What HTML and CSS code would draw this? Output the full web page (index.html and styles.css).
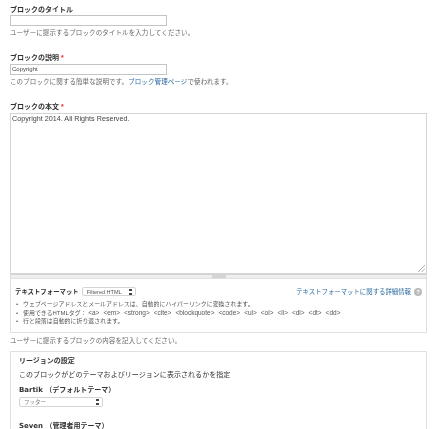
FILE: index.html
```html
<!DOCTYPE html>
<html lang="ja">
<head>
<meta charset="utf-8">
<title>ブロックの設定</title>
<link rel="stylesheet" href="styles.css">
</head>
<body>
<div class="page">
  <div class="item first">
    <label class="label">ブロックのタイトル</label>
    <div class="fake-input"></div>
    <div class="help">ユーザーに提示するブロックのタイトルを入力してください。</div>
  </div>
  <div class="item">
    <label class="label">ブロックの説明 <span class="req">*</span></label>
    <div class="fake-input">Copyright</div>
    <div class="help">このブロックに関する簡単な説明です。<a class="link">ブロック管理ページ</a>で使われます。</div>
  </div>
  <div class="item last">
    <label class="label">ブロックの本文 <span class="req">*</span></label>
    <div class="textarea">
      <div class="text">Copyright 2014. All Rights Reserved.</div>
      <svg class="resize" width="7" height="7" viewBox="0 0 7 7"><path d="M0 7L7 0M3.500 7L7 3.500" stroke="#aaa" fill="none"/></svg>
    </div>
    <div class="grippie"><span class="grip"></span></div>
    <div class="format">
      <div class="format-head">
        <div class="format-left">
          <span class="format-title">テキストフォーマット</span>
          <span class="select small">Filtered HTML<span class="arrows"></span></span>
        </div>
        <div class="format-right">
          <a class="link">テキストフォーマットに関する詳細情報</a>
          <span class="q">?</span>
        </div>
      </div>
      <ul class="tips">
        <li>ウェブページアドレスとメールアドレスは、自動的にハイパーリンクに変換されます。</li>
        <li>使用できるHTMLタグ： <span class="tags">&lt;a&gt; &lt;em&gt; &lt;strong&gt; &lt;cite&gt; &lt;blockquote&gt; &lt;code&gt; &lt;ul&gt; &lt;ol&gt; &lt;li&gt; &lt;dl&gt; &lt;dt&gt; &lt;dd&gt;</span></li>
        <li>行と段落は自動的に折り返されます。</li>
      </ul>
    </div>
    <div class="help after">ユーザーに提示するブロックの内容を記入してください。</div>
  </div>
  <div class="fieldset">
    <div class="fs-title">リージョンの設定</div>
    <div class="fs-desc">このブロックがどのテーマおよびリージョンに表示されるかを指定</div>
    <div class="theme">Bartik （デフォルトテーマ）</div>
    <span class="select wide">フッター<span class="arrows"></span></span>
    <div class="theme second">Seven （管理者用テーマ）</div>
  </div>
</div>
</body>
</html>
```
FILE: styles.css
```css
html, body {
  margin: 0;
  padding: 0;
  background: #fff;
  overflow: hidden;
}
body {
  width: 440px;
  height: 429px;
  font-family: "Liberation Sans", "Noto Sans CJK JP", sans-serif;
  color: #333;
}
.page {
  padding: 0 13px 0 10px;
  height: 429px;
  overflow: hidden;
  filter: blur(0.35px);
}
.item {
  margin-bottom: 15px;
}
.item.first {
  padding-top: 5px;
}
.item.first .label {
  padding-bottom: 0;
}
.item.last {
  margin-bottom: 5px;
}
.label {
  display: block;
  font-size: 7px;
  line-height: 10px;
  padding-bottom: 1px;
  font-weight: 700;
  color: #333;
}
.req {
  color: #e22;
}
.fake-input {
  box-sizing: border-box;
  width: 157px;
  height: 11px;
  border: 1px solid #c4c4c4;
  font-size: 6px;
  line-height: 9px;
  padding-left: 1px;
  color: #444;
  background: #fff;
}
.help {
  font-size: 6.500px;
  letter-spacing: 0.1px;
  line-height: 10px;
  margin-top: 2px;
  color: #666;
}
.help.after {
  margin-top: 3px;
}
.link {
  color: #2d6ca2;
}
.textarea {
  position: relative;
  box-sizing: border-box;
  height: 161px;
  border: 1px solid #d4d4d4;
  background: #fff;
  padding: 0 1px;
}
.text {
  font-size: 7.200px;
  line-height: 9px;
  color: #444;
}
.resize {
  position: absolute;
  right: 1px;
  bottom: 1px;
}
.grippie {
  height: 5px;
  background: #eee;
  border: 1px solid #e0e0e0;
  border-top-color: #d4d4d4;
  box-sizing: border-box;
  display: flex;
  justify-content: center;
  align-items: center;
}
.grip {
  display: block;
  width: 14px;
  height: 3px;
  background: #d4d4d4;
}
.format {
  box-sizing: border-box;
  height: 54px;
  border: 1px solid #e0e0e0;
  border-top: 0;
  padding: 7px 4px 0;
}
.format-head {
  display: flex;
  justify-content: space-between;
  align-items: center;
  height: 11px;
}
.format-left {
  display: flex;
  align-items: center;
  gap: 3px;
}
.format-right {
  display: flex;
  align-items: center;
  gap: 3px;
  font-size: 6.400px;
}
.format-title {
  font-size: 6.400px;
  font-weight: 700;
}
.select {
  display: flex;
  justify-content: space-between;
  align-items: center;
  box-sizing: border-box;
  border: 1px solid #d4d4d4;
  border-radius: 2px;
  background: #fff;
  color: #555;
  font-size: 5.500px;
}
.small {
  width: 54px;
  height: 9px;
  padding: 0 3px 0 4px;
}
.wide {
  width: 84px;
  height: 10px;
  margin-top: 1px;
  padding: 0 3px 0 4px;
  color: #777;
}
.arrows {
  display: block;
  width: 3px;
  height: 6px;
  background: linear-gradient(#444 0 2px, transparent 2px 4px, #444 4px 6px);
}
.q {
  display: block;
  width: 8px;
  height: 8px;
  border-radius: 50%;
  background: #bbb;
  color: #fff;
  font-size: 6px;
  line-height: 8px;
  text-align: center;
  font-weight: 700;
}
.tips {
  margin: 3px 0 0;
  padding: 0 0 0 1px;
  list-style: none;
  font-size: 5.950px;
  line-height: 8.500px;
  color: #555;
}
.tips li::before {
  content: "•";
  display: inline-block;
  width: 7px;
}
.tags {
  font-size: 6.500px;
  word-spacing: 2.200px;
}
.fieldset {
  box-sizing: border-box;
  border: 1px solid #e0e0e0;
  height: 90px;
  padding: 3px 8px;
}
.fs-title {
  font-size: 7px;
  font-weight: 700;
  line-height: 11px;
}
.fs-desc {
  font-size: 7px;
  letter-spacing: 0.05px;
  line-height: 11px;
  margin-top: 3px;
}
.theme {
  font-size: 7px;
  font-weight: 700;
  line-height: 11px;
  margin-top: 5px;
  font-family: "DejaVu Sans", "Noto Sans CJK JP", sans-serif;
}
.theme.second {
  margin-top: 14px;
}
```
